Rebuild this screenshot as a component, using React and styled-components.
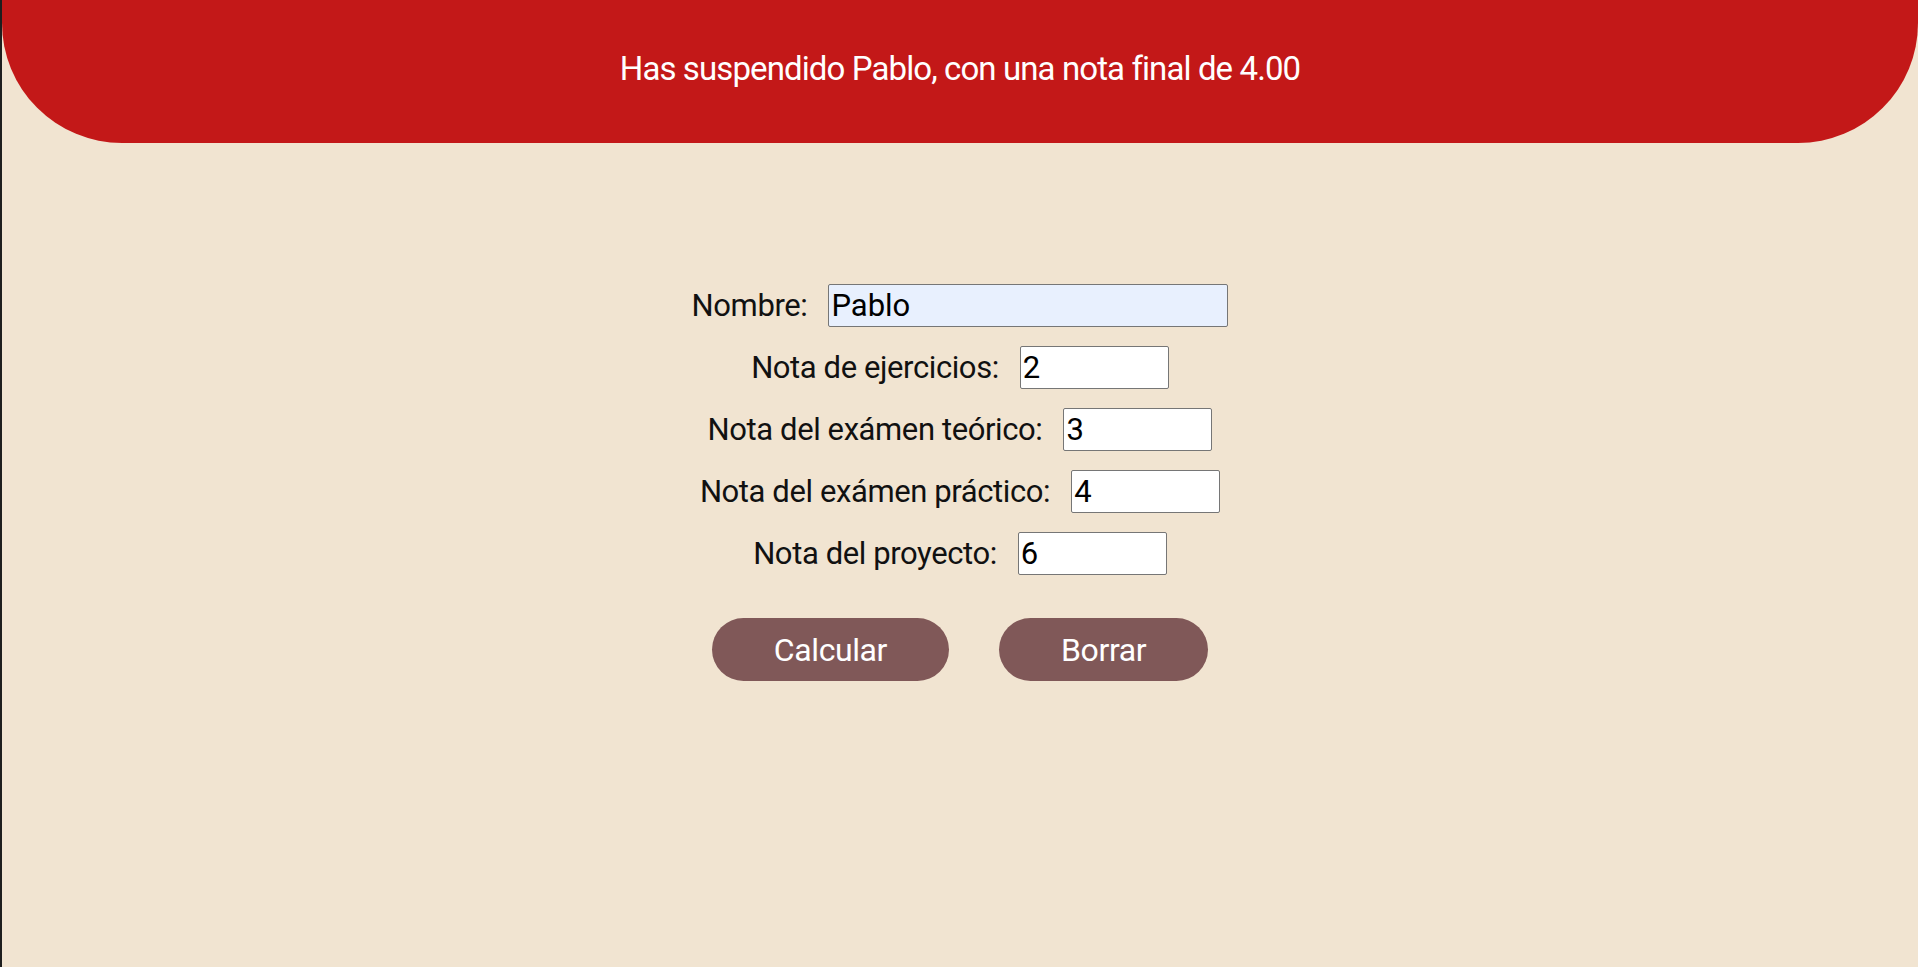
import styled, { createGlobalStyle } from "styled-components";

const GlobalStyle = createGlobalStyle`
  html, body {
    margin: 0;
    padding: 0;
    background: #f1e4d1;
  }
  body {
    font-family: Roboto, "Liberation Sans", sans-serif;
  }
`;

const Page = styled.div`
  min-height: 100vh;
  background: #f1e4d1;
  border-left: 2px solid #1e1e1e;
  box-sizing: border-box;
`;

const Banner = styled.header`
  box-sizing: border-box;
  height: 143px;
  padding-bottom: 6px;
  background: #c31818;
  border-radius: 0 0 120px 120px;
  display: flex;
  align-items: center;
  justify-content: center;
  color: #ffffff;
  font-size: 33px;
  letter-spacing: -0.9px;
`;

const Form = styled.form`
  display: flex;
  flex-direction: column;
  align-items: center;
  gap: 19px;
  padding-top: 141px;
`;

const Row = styled.div`
  display: flex;
  align-items: center;
  gap: 21px;
  color: #111;
  font-size: 31px;
  letter-spacing: -0.4px;
`;

const Input = styled.input`
  box-sizing: border-box;
  width: ${(p) => p.$w || 149}px;
  height: 43px;
  padding: 1px 2px;
  border: 1px solid #767676;
  border-radius: 2px;
  background: ${(p) => (p.$filled ? "#e8f0fe" : "#ffffff")};
  font-family: inherit;
  font-size: 31px;
  color: #000;
  outline: none;
`;

const Buttons = styled.div`
  display: flex;
  gap: 50px;
  margin-top: 24px;
`;

const Button = styled.button`
  height: 63px;
  padding: 0 62px;
  border: none;
  border-radius: 32px;
  background: #805858;
  color: #fff;
  font-family: inherit;
  font-size: 32px;
  letter-spacing: -0.4px;
  cursor: pointer;
`;

const fields = [
  { label: "Nombre:", value: "Pablo", w: 400, filled: true },
  { label: "Nota de ejercicios:", value: "2" },
  { label: "Nota del exámen teórico:", value: "3" },
  { label: "Nota del exámen práctico:", value: "4" },
  { label: "Nota del proyecto:", value: "6" },
];

export default function App() {
  return (
    <Page>
      <GlobalStyle />
      <Banner>Has suspendido Pablo, con una nota final de 4.00</Banner>
      <Form onSubmit={(e) => e.preventDefault()}>
        {fields.map((f) => (
          <Row key={f.label}>
            <label>{f.label}</label>
            <Input defaultValue={f.value} $w={f.w} $filled={f.filled} />
          </Row>
        ))}
        <Buttons>
          <Button type="submit">Calcular</Button>
          <Button type="button">Borrar</Button>
        </Buttons>
      </Form>
    </Page>
  );
}
